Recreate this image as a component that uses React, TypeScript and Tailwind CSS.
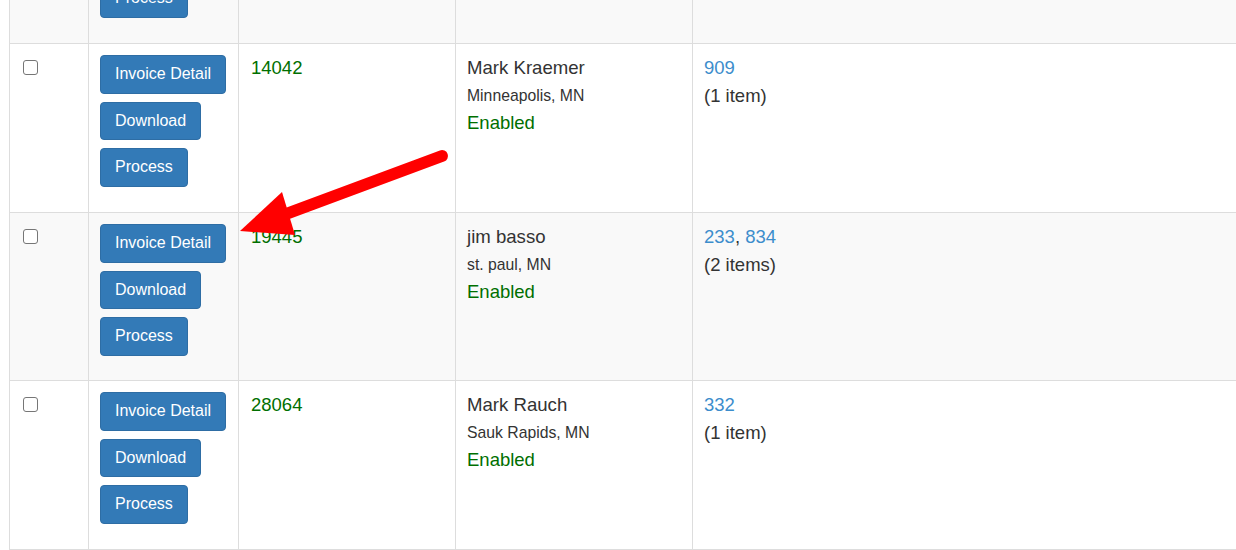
import React from "react";

type Row = {
  id: string;
  name: string;
  city: string;
  orders: string[];
  items: string;
  striped: boolean;
  h: string;
};

const rows: Row[] = [
  { id: "11111", name: "", city: "", orders: [], items: "", striped: true, h: "h-[169px]" },
  { id: "14042", name: "Mark Kraemer", city: "Minneapolis, MN", orders: ["909"], items: "(1 item)", striped: false, h: "h-[169px]" },
  { id: "19445", name: "jim basso", city: "st. paul, MN", orders: ["233", "834"], items: "(2 items)", striped: true, h: "h-[168px]" },
  { id: "28064", name: "Mark Rauch", city: "Sauk Rapids, MN", orders: ["332"], items: "(1 item)", striped: false, h: "h-[169px]" },
];

function Btn({ children }: { children: React.ReactNode }) {
  return (
    <div className="flex h-[38.6px] w-fit items-center rounded-[4px] border border-[#2e6da4] bg-[#337ab7] px-[14px] text-[16px] leading-none text-white">
      {children}
    </div>
  );
}

function Checkbox() {
  return <div className="mt-[5px] ml-[1px] h-[15px] w-[15px] rounded-[3px] border border-[#767676] bg-white" />;
}

export default function App() {
  return (
    <div
      className="relative h-[550px] w-[1236px] overflow-hidden bg-white text-[#333]"
      style={{ fontFamily: '"Liberation Sans", Arial, sans-serif' }}
    >
      <div className="ml-[9px] mt-[-125px]">
        {rows.map((r, i) => (
          <div
            key={i}
            className={`grid grid-cols-[79px_150px_217px_237px_1fr] border-b border-[#dddddd] ${r.h} ${
              r.striped ? "bg-[#f9f9f9]" : "bg-white"
            }`}
          >
            <div className="border-l border-[#dddddd] pl-[12px] pt-[11px]">
              <Checkbox />
            </div>
            <div className="flex flex-col gap-[8px] border-l border-[#dddddd] pl-[11px] pt-[11px]">
              <Btn>Invoice Detail</Btn>
              <Btn>Download</Btn>
              <Btn>Process</Btn>
            </div>
            <div className="border-l border-[#dddddd] pl-[12px] pt-[10px] text-[18.5px] leading-[27px] text-[#006f00]">
              {i > 0 ? r.id : ""}
            </div>
            <div className="border-l border-[#dddddd] pl-[11px] pt-[10px]">
              {i > 0 && (
                <>
                  <div className="text-[18.6px] leading-[27px]">{r.name}</div>
                  <div className="mt-[1px] text-[15.75px] leading-[27px]">{r.city}</div>
                  <div className="text-[18.5px] leading-[27px] text-[#006f00]">Enabled</div>
                </>
              )}
            </div>
            <div className="border-l border-[#dddddd] pl-[11px] pt-[10px] text-[18.5px] leading-[27px]">
              {i > 0 && (
                <>
                  <div>
                    {r.orders.map((o, j) => (
                      <React.Fragment key={o}>
                        {j > 0 && <span>, </span>}
                        <span className="text-[#3c8dcc]">{o}</span>
                      </React.Fragment>
                    ))}
                  </div>
                  <div className="mt-[1px]">{r.items}</div>
                </>
              )}
            </div>
          </div>
        ))}
      </div>
      <svg
        className="pointer-events-none absolute left-0 top-0"
        width="1236"
        height="550"
        viewBox="0 0 1236 550"
      >
        <line x1="442" y1="156" x2="286" y2="214" stroke="#ff0000" strokeWidth="12" strokeLinecap="round" />
        <polygon points="240,231 282,192 295,235" fill="#ff0000" />
      </svg>
    </div>
  );
}
